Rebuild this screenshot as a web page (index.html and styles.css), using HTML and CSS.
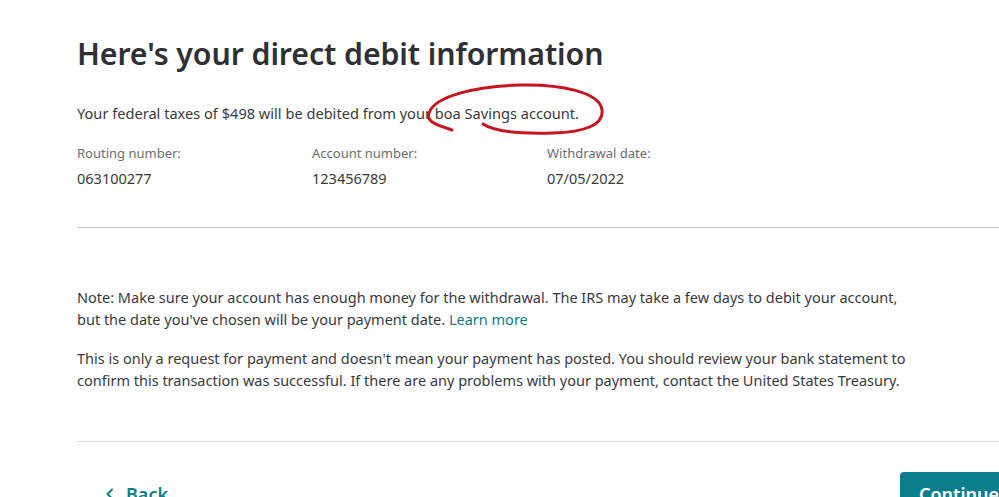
FILE: index.html
```html
<!DOCTYPE html>
<html lang="en">
<head>
<meta charset="utf-8">
<title>Direct debit information</title>
<link rel="stylesheet" href="styles.css">
</head>
<body>
<main class="page">
  <h1 class="title">Here's your direct debit information</h1>
  <p class="lead">Your federal taxes of $498 will be debited from your boa Savings account.</p>
  <div class="details">
    <div class="detail">
      <div class="label">Routing number:</div>
      <div class="value">063100277</div>
    </div>
    <div class="detail">
      <div class="label">Account number:</div>
      <div class="value">123456789</div>
    </div>
    <div class="detail">
      <div class="label">Withdrawal date:</div>
      <div class="value">07/05/2022</div>
    </div>
  </div>
  <hr class="rule rule-top">
  <div class="notes">
    <p class="note">Note: Make sure your account has enough money for the withdrawal. The IRS may take a few days to debit your account, but the date you've chosen will be your payment date. <a class="link" href="#">Learn more</a></p>
    <p class="note">This is only a request for payment and doesn't mean your payment has posted. You should review your bank statement to confirm this transaction was successful. If there are any problems with your payment, contact the United States Treasury.</p>
  </div>
  <hr class="rule rule-bottom">
  <div class="actions">
    <a class="back" href="#">
      <svg class="chev" width="9" height="12" viewBox="0 0 9 12"><path d="M7 1.5 L2.5 6 L7 10.5" fill="none" stroke="currentColor" stroke-width="2" stroke-linecap="round" stroke-linejoin="round"/></svg>
      <span>Back</span>
    </a>
    <button class="continue">Continue</button>
  </div>
</main>
<svg class="annotation" width="999" height="497" viewBox="0 0 999 497">
  <path d="M452 130 C 440 126, 425 122, 429 113 C 435 95, 480 86, 520 85 C 560 84, 600 92, 602 110 C 604 125, 585 132, 553 133 C 520 134, 495 132, 483 124" fill="none" stroke="#c8141e" stroke-width="3" stroke-linecap="round"/>
</svg>
</body>
</html>
```
FILE: styles.css
```css
html, body {
  margin: 0;
  padding: 0;
  background: #ffffff;
  overflow: hidden;
}
body {
  width: 999px;
  height: 497px;
  position: relative;
  font-family: "Noto Sans", "Open Sans", sans-serif;
  color: #393a3d;
}
.page {
  padding: 34px 0 0 77px;
  box-sizing: border-box;
  width: 999px;
}
.title {
  margin: 0;
  font-size: 30.3px;
  font-weight: 600;
  line-height: 40px;
  color: #2f3033;
  letter-spacing: -0.1px;
}
.lead {
  margin: 28px 0 0;
  font-size: 14.6px;
  line-height: 22px;
}
.details {
  display: flex;
  margin-top: 19px;
}
.detail {
  width: 235px;
}
.label {
  font-size: 13px;
  line-height: 20px;
  color: #6b6c72;
}
.value {
  margin-top: 4px;
  font-size: 14.5px;
  line-height: 22px;
}
.rule {
  border: 0;
  height: 1px;
  margin: 0;
}
.rule-top {
  background: #c8c8c8;
  margin-top: 38px;
}
.notes {
  padding-top: 58px;
  width: 840px;
}
.note {
  margin: 0 0 17px;
  font-size: 14.5px;
  line-height: 22px;
}
.link {
  color: #0d7d86;
  text-decoration: none;
}
.rule-bottom {
  background: #dcdcdc;
  margin-top: 50px;
}
.actions {
  display: flex;
  justify-content: space-between;
  align-items: flex-start;
  margin-top: 30px;
  margin-right: -21px;
}
.back {
  display: flex;
  align-items: center;
  gap: 12px;
  margin-left: 28px;
  margin-top: 10px;
  color: #0d7d86;
  font-size: 18px;
  font-weight: 600;
  text-decoration: none;
}
.continue {
  background: #0a7f8c;
  color: #ffffff;
  border: 0;
  border-radius: 4px;
  font-family: inherit;
  font-size: 18px;
  font-weight: 600;
  padding: 10px 19px;
  width: 120px;
  text-align: left;
}
.annotation {
  position: absolute;
  left: 0;
  top: 0;
  pointer-events: none;
}
```
